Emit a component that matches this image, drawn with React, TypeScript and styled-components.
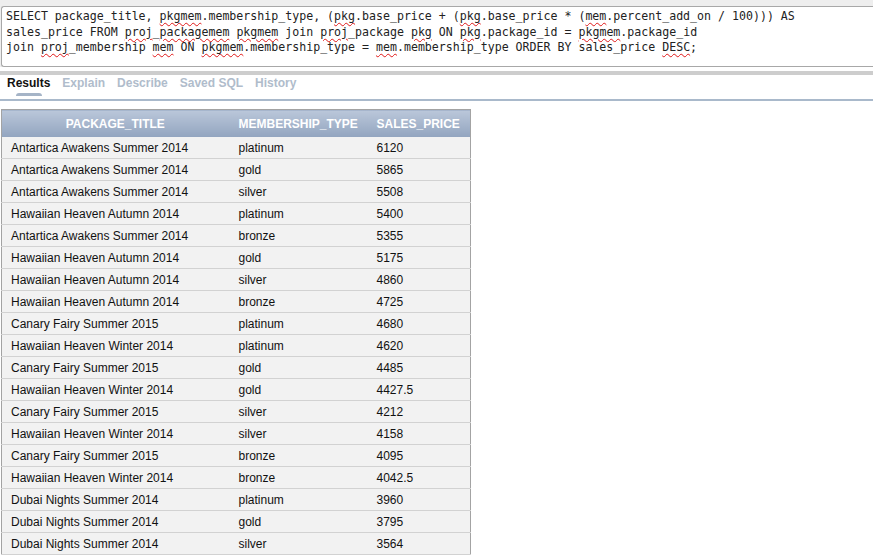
import styled, { createGlobalStyle } from "styled-components";

const GlobalStyle = createGlobalStyle`
  html, body {
    margin: 0;
    padding: 0;
    background: #ffffff;
    overflow: hidden;
  }
  body {
    font-family: "Liberation Sans", Arial, sans-serif;
  }
`;

const Page = styled.div`
  width: 873px;
  height: 559px;
  overflow: hidden;
`;

const EditorArea = styled.div`
  background: #eeeeee;
  padding-top: 6px;
`;

const Editor = styled.div`
  height: 57px;
  margin-left: 1px;
  background: #ffffff;
  border: 1px solid #a8a8a8;
  border-right: none;
  border-radius: 3px 0 0 3px;
  padding: 2px 0 0 4px;
  font-family: "DejaVu Sans Mono", "Liberation Mono", monospace;
  font-size: 11.6px;
  line-height: 15.5px;
  color: #222;
  white-space: pre;
`;

const Typo = styled.span`
  text-decoration: underline wavy #e01818;
  text-decoration-thickness: 1px;
  text-underline-offset: 2px;
`;

const Splitter = styled.div`
  margin-top: 4px;
  height: 4px;
  background: #cdcdcd;
`;

const TabBar = styled.div`
  display: flex;
  gap: 12px;
  height: 24px;
  padding-left: 7px;
  border-bottom: 2px solid #a9b9cb;
`;

const Tab = styled.div<{ $active?: boolean }>`
  position: relative;
  font-size: 12px;
  font-weight: bold;
  line-height: 14px;
  padding-top: 1px;
  color: ${(p) => (p.$active ? "#111111" : "#b0bccb")};
`;

const TabMark = styled.span`
  position: absolute;
  left: 9px;
  width: 26px;
  bottom: 3px;
  height: 3px;
  background: #a5b4c7;
  border-radius: 3px 3px 0 0;
`;

const TableWrap = styled.div`
  padding: 8px 0 0 1px;
`;

const Grid = styled.table`
  width: 469px;
  table-layout: fixed;
  border-collapse: collapse;
  border: 1px solid #a3a3a3;
  font-size: 12px;
`;

const HeadCell = styled.th<{ $first?: boolean }>`
  height: 27px;
  padding: ${(p) => (p.$first ? "0 10px" : "0 0 0 10px")};
  text-align: ${(p) => (p.$first ? "center" : "left")};
  color: #ffffff;
  font-weight: bold;
  background: linear-gradient(#bac7da, #92a4bf);
  white-space: nowrap;
`;

const Row = styled.tr`
  background: #f2f2f2;
  border-bottom: 1px solid #d2d2d2;
`;

const Cell = styled.td<{ $first?: boolean }>`
  height: 21px;
  padding: 0 0 0 ${(p) => (p.$first ? "9px" : "10px")};
  color: #111111;
  white-space: nowrap;
`;

const rows: [string, string, string][] = [
  ["Antartica Awakens Summer 2014", "platinum", "6120"],
  ["Antartica Awakens Summer 2014", "gold", "5865"],
  ["Antartica Awakens Summer 2014", "silver", "5508"],
  ["Hawaiian Heaven Autumn 2014", "platinum", "5400"],
  ["Antartica Awakens Summer 2014", "bronze", "5355"],
  ["Hawaiian Heaven Autumn 2014", "gold", "5175"],
  ["Hawaiian Heaven Autumn 2014", "silver", "4860"],
  ["Hawaiian Heaven Autumn 2014", "bronze", "4725"],
  ["Canary Fairy Summer 2015", "platinum", "4680"],
  ["Hawaiian Heaven Winter 2014", "platinum", "4620"],
  ["Canary Fairy Summer 2015", "gold", "4485"],
  ["Hawaiian Heaven Winter 2014", "gold", "4427.5"],
  ["Canary Fairy Summer 2015", "silver", "4212"],
  ["Hawaiian Heaven Winter 2014", "silver", "4158"],
  ["Canary Fairy Summer 2015", "bronze", "4095"],
  ["Hawaiian Heaven Winter 2014", "bronze", "4042.5"],
  ["Dubai Nights Summer 2014", "platinum", "3960"],
  ["Dubai Nights Summer 2014", "gold", "3795"],
  ["Dubai Nights Summer 2014", "silver", "3564"],
];

const App = () => {
  return (
    <Page>
      <GlobalStyle />
      <EditorArea>
        <Editor>
          SELECT package_title, <Typo>pkgmem</Typo>.membership_type, (<Typo>pkg</Typo>.base_price + (<Typo>pkg</Typo>.base_price * (<Typo>mem</Typo>.percent_add_on / 100))) AS{"\n"}
          sales_price FROM <Typo>proj</Typo>_<Typo>packagemem</Typo> <Typo>pkgmem</Typo> join <Typo>proj</Typo>_package <Typo>pkg</Typo> ON <Typo>pkg</Typo>.package_id = <Typo>pkgmem</Typo>.package_id{"\n"}
          join <Typo>proj</Typo>_membership <Typo>mem</Typo> ON <Typo>pkgmem</Typo>.membership_type = <Typo>mem</Typo>.membership_type ORDER BY sales_price <Typo>DESC</Typo>;
        </Editor>
      </EditorArea>
      <Splitter />
      <TabBar>
        <Tab $active>
          Results
          <TabMark />
        </Tab>
        <Tab>Explain</Tab>
        <Tab>Describe</Tab>
        <Tab>Saved SQL</Tab>
        <Tab>History</Tab>
      </TabBar>
      <TableWrap>
        <Grid>
          <colgroup>
            <col style={{ width: 227 }} />
            <col style={{ width: 138 }} />
            <col style={{ width: 104 }} />
          </colgroup>
          <thead>
            <tr>
              <HeadCell $first>PACKAGE_TITLE</HeadCell>
              <HeadCell>MEMBERSHIP_TYPE</HeadCell>
              <HeadCell>SALES_PRICE</HeadCell>
            </tr>
          </thead>
          <tbody>
            {rows.map(([title, type, price], i) => (
              <Row key={i}>
                <Cell $first>{title}</Cell>
                <Cell>{type}</Cell>
                <Cell>{price}</Cell>
              </Row>
            ))}
          </tbody>
        </Grid>
      </TableWrap>
    </Page>
  );
};

export default App;
